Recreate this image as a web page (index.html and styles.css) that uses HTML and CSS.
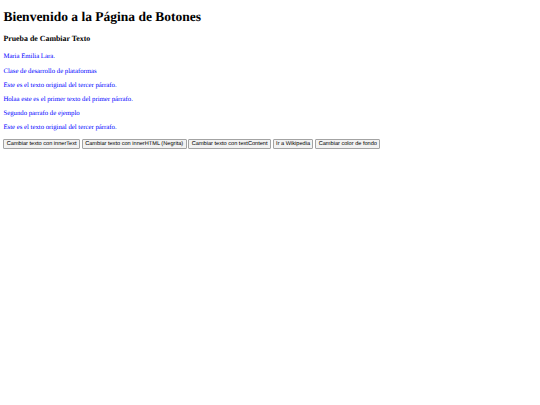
FILE: index.html
```html
<!DOCTYPE html>
<html lang="es">
<head>
<meta charset="utf-8">
<title>Botones</title>
<link rel="stylesheet" href="styles.css">
</head>
<body>
<main class="page">
<h1 class="title">Bienvenido a la Página de Botones</h1>
<h3 class="subtitle">Prueba de Cambiar Texto</h3>
<p class="text first">Maria Emilia Lara.</p>
<p class="text">Clase de desarrollo de plataformas</p>
<p class="text">Este es el texto original del tercer párrafo.</p>
<p class="text">Holaa este es el primer texto del primer párrafo.</p>
<p class="text">Segundo parrafo de ejemplo</p>
<p class="text">Este es el texto original del tercer párrafo.</p>
<div class="actions">
<button class="btn">Cambiar texto con innerText</button>
<button class="btn">Cambiar texto con innerHTML (Negrita)</button>
<button class="btn">Cambiar texto con textContent</button>
<button class="btn">Ir a Wikipedia</button>
<button class="btn">Cambiar color de fondo</button>
</div>
</main>
</body>
</html>
```
FILE: styles.css
```css
html {
  background: #ffffff;
}
body {
  margin: 0;
  font-family: "Liberation Serif", "Times New Roman", serif;
  font-size: 6.75px;
  line-height: 1.149;
  color: #000000;
  text-rendering: geometricPrecision;
}
.page {
  display: flex;
  flex-direction: column;
  align-items: flex-start;
  padding: 0 3.375px;
}
.title {
  font-size: 13.5px;
  font-weight: bold;
  margin: 9px 0 0;
}
.subtitle {
  font-size: 7.9px;
  font-weight: bold;
  margin: 9px 0 0;
}
.text {
  font-size: 6.75px;
  margin: 6.35px 0 0;
  color: #0000ff;
}
.text.first {
  margin-top: 10.9px;
}
.actions {
  display: flex;
  gap: 1.8px;
  margin-top: 7.75px;
}
.btn {
  font-family: "Liberation Sans", Arial, sans-serif;
  font-size: 5.625px;
  line-height: 1.149;
  padding: 0.5px 2.4px;
  margin: 0;
  background: #f2f2f2;
  color: #000000;
  border: 1px solid #a3a3a3;
  border-radius: 1px;
  text-rendering: geometricPrecision;
}
```
